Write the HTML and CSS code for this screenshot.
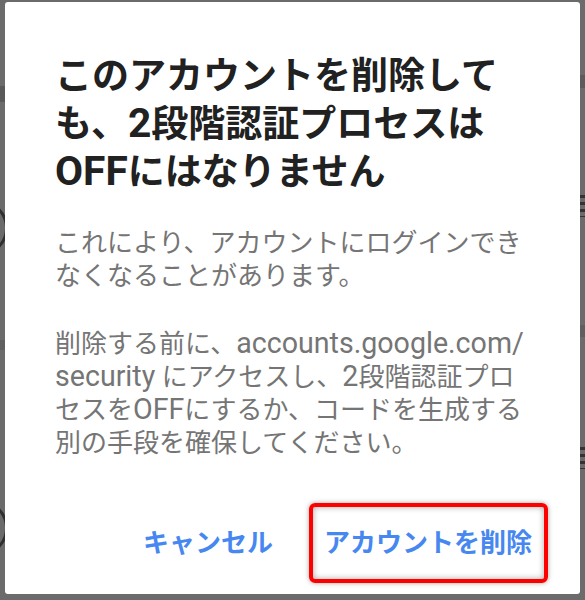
FILE: index.html
```html
<!DOCTYPE html>
<html lang="ja">
<head>
<meta charset="utf-8">
<link rel="stylesheet" href="styles.css">
</head>
<body>
<div class="backdrop">
  <span class="deco band-l1"></span>
  <span class="deco band-l2"></span>
  <span class="deco band-r1"></span>
  <span class="deco band-r2"></span>
  <span class="deco ring ring-1"></span>
  <span class="deco ring ring-2"></span>
  <span class="deco lines lines-1"></span>
  <span class="deco lines lines-2"></span>
</div>
<div class="dialog">
  <h1 class="title">このアカウントを削除して<br>も、<span class="latin">2</span>段階認証プロセスは<br><span class="latin">OFF</span>にはなりません</h1>
  <p class="body-text">これにより、アカウントにログインでき<br>なくなることがあります。</p>
  <p class="body-text second">削除する前に、<span class="latin">accounts.google.com/</span><br><span class="latin">security</span> にアクセスし、<span class="latin">2</span>段階認証プロ<br>セスを<span class="latin">OFF</span>にするか、コードを生成する<br>別の手段を確保してください。</p>
  <div class="actions">
    <button class="btn">キャンセル</button>
    <button class="btn btn-highlight">アカウントを削除</button>
  </div>
</div>
</body>
</html>
```
FILE: styles.css
```css
html, body {
  margin: 0;
  padding: 0;
}
body {
  width: 585px;
  height: 600px;
  background: #6b6b6b;
  overflow: hidden;
  position: relative;
  font-family: Roboto, "Noto Sans CJK JP", sans-serif;
}
.backdrop {
  position: absolute;
  inset: 0;
}
.deco {
  position: absolute;
  display: block;
}
.band-l1 { left: 0; top: 86px; width: 5px; height: 16px; background: #595959; }
.band-l2 { left: 0; top: 340px; width: 5px; height: 10px; background: #5f5f5f; }
.band-r1 { right: 0; top: 75px; width: 5px; height: 13px; background: #5b5b5b; }
.band-r2 { right: 0; top: 325px; width: 5px; height: 12px; background: #5f5f5f; }
.ring {
  width: 50px;
  height: 50px;
  border: 3px solid #2f2f2f;
  border-radius: 50%;
  left: -48px;
}
.ring-1 { top: 200px; }
.ring-2 { top: 500px; }
.lines {
  right: 0;
  width: 5px;
  height: 22px;
  background: repeating-linear-gradient(to bottom, #333 0 3px, transparent 3px 7px);
}
.lines-1 { top: 195px; }
.lines-2 { top: 447px; }

.dialog {
  position: relative;
  margin: 2px 0 0 5px;
  width: 575px;
  height: 592px;
  box-sizing: border-box;
  background: #ffffff;
  border-radius: 3px;
  padding: 51px 32px 0 50px;
}
.title {
  margin: 0;
  font-size: 37px;
  line-height: 48px;
  font-weight: 700;
  color: #212121;
  white-space: nowrap;
}
.latin {
  font-family: Roboto, sans-serif;
  font-size: 1.1em;
  line-height: 1;
}
.body-text {
  margin: 30px 0 0;
  font-size: 26px;
  line-height: 33px;
  color: #757575;
  white-space: nowrap;
}
.body-text.second {
  margin-top: 35px;
}
.actions {
  margin-top: 43px;
  display: flex;
  justify-content: flex-end;
  align-items: center;
  gap: 36px;
}
.btn {
  font-family: Roboto, "Noto Sans CJK JP", sans-serif;
  font-size: 26px;
  font-weight: 700;
  color: #4787f0;
  background: none;
  border: none;
  padding: 0;
  line-height: 72px;
}
.btn-highlight {
  border: 4px solid #ff0000;
  border-radius: 6px;
  padding: 0 12px 0 11px;
  box-shadow: 0 0 5px rgba(0,0,0,0.35), inset 0 0 6px rgba(0,0,0,0.35);
}
```
